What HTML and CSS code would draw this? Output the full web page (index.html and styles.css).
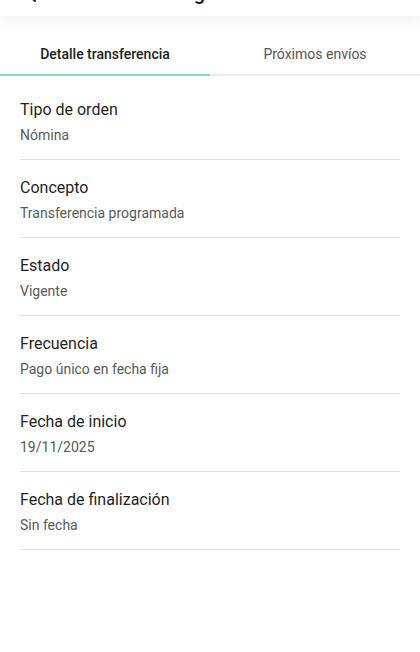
FILE: index.html
```html
<!DOCTYPE html>
<html lang="es">
<head>
    <meta charset="UTF-8">
    <meta name="viewport" content="width=device-width, initial-scale=1.0">
    <title>Detalle transferencia</title>
    <link rel="stylesheet" href="styles.css">
</head>
<body>
<div class="header">
    <svg class="back" width="24" height="24" viewBox="0 0 24 24">
        <path d="M15 6 L9 12 L15 18" fill="none" stroke="#222" stroke-width="2" stroke-linecap="round" stroke-linejoin="round"/>
    </svg>
    <span class="title">Orden de cargo</span>
</div>

<div class="tabs">
    <div class="tab active">Detalle transferencia</div>
    <div class="tab">Próximos envíos</div>
</div>

<div class="list">
    <div class="row">
        <div class="label">Tipo de orden</div>
        <div class="value">Nómina</div>
    </div>
    <div class="row">
        <div class="label">Concepto</div>
        <div class="value">Transferencia programada</div>
    </div>
    <div class="row">
        <div class="label">Estado</div>
        <div class="value">Vigente</div>
    </div>
    <div class="row">
        <div class="label">Frecuencia</div>
        <div class="value">Pago único en fecha fija</div>
    </div>
    <div class="row">
        <div class="label">Fecha de inicio</div>
        <div class="value">19/11/2025</div>
    </div>
    <div class="row">
        <div class="label">Fecha de finalización</div>
        <div class="value">Sin fecha</div>
    </div>
</div>
</body>
</html>
```

FILE: styles.css
```css
body {
    font-family: Roboto, "Noto Sans", sans-serif;
    background-color: #fff;
    margin: 0;
    color: #1f1f1f;
}

/* header is scrolled mostly out of view */
.header {
    height: 56px;
    margin-top: -40px;
    display: flex;
    align-items: flex-end;
    background-color: #fff;
    box-shadow: 0 4px 12px rgba(0, 0, 0, 0.07);
    position: relative;
}

.back {
    margin-left: 20px;
    margin-bottom: 9px;
}

.title {
    margin-left: 36px;
    margin-bottom: 11px;
    font-size: 20px;
    line-height: 24px;
    font-weight: 500;
}

.tabs {
    display: flex;
}

.tab {
    flex: 1;
    text-align: center;
    font-size: 14px;
    line-height: 20px;
    padding: 28px 0 10px;
    color: #555;
    border-bottom: 2px solid #ebebeb;
}

.tab.active {
    color: #212121;
    font-weight: 500;
    border-bottom-color: #86dea6;
}

.list {
    padding: 6px 20px 0;
}

.row {
    padding: 16px 0 14px;
    border-bottom: 1px solid #e2e2e2;
}

.label {
    font-size: 16px;
    line-height: 24px;
    color: #1f1f1f;
}

.value {
    margin-top: 3px;
    font-size: 14px;
    line-height: 20px;
    color: #5a5a5a;
}
```
